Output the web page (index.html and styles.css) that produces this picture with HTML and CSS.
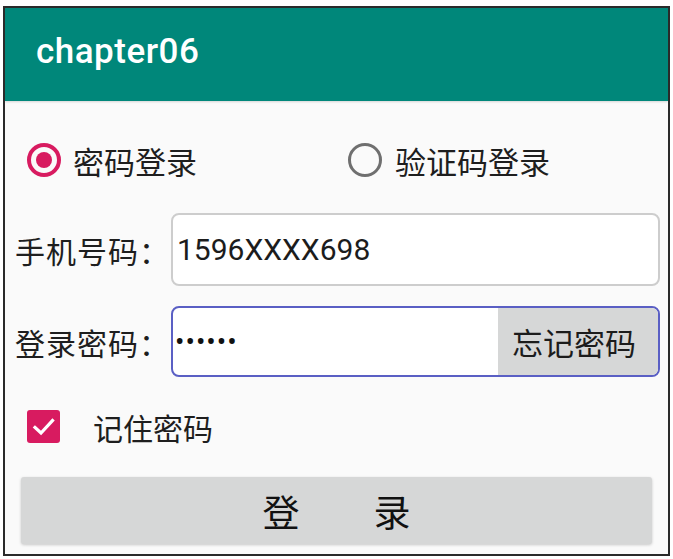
FILE: index.html
```html
<!DOCTYPE html>
<html lang="zh-CN">
<head>
<meta charset="utf-8">
<title>chapter06</title>
<link rel="stylesheet" href="styles.css">
</head>
<body>
<div class="frame">
  <header class="appbar"><span class="title">chapter06</span></header>
  <main class="content">
    <div class="radios">
      <label class="radio"><span class="radio-mark on"></span><span class="radio-text">密码登录</span></label>
      <label class="radio second"><span class="radio-mark"></span><span class="radio-text">验证码登录</span></label>
    </div>
    <div class="row row-phone">
      <span class="label">手机号码：</span>
      <div class="field"><span class="value">1596XXXX698</span></div>
    </div>
    <div class="row row-pwd">
      <span class="label">登录密码：</span>
      <div class="field focused"><span class="value dots">••••••</span><span class="forgot">忘记密码</span></div>
    </div>
    <div class="remember">
      <span class="check"><svg viewBox="0 0 33 33" width="33" height="33"><path d="M8 17.5 L14 23 L25.5 10.5" fill="none" stroke="#fff" stroke-width="3.2" stroke-linecap="square"/></svg></span>
      <span class="remember-text">记住密码</span>
    </div>
    <div class="login">登　　录</div>
  </main>
</div>
</body>
</html>
```

FILE: styles.css
```css
body {
  margin: 0;
  background: #ffffff;
  font-family: Roboto, "Noto Sans CJK SC", sans-serif;
  color: #222222;
}

.frame {
  margin: 6px 0 0 3px;
  width: 667px;
  height: 550px;
  box-sizing: border-box;
  border: 2px solid #2a2a2a;
  background: #fafafa;
  display: flex;
  flex-direction: column;
  overflow: hidden;
}

.appbar {
  flex-shrink: 0;
  height: 93px;
  background: #00877a;
  display: flex;
  align-items: center;
  padding-left: 31px;
  box-shadow: 0 1px 2px rgba(0, 0, 0, 0.15);
}

.title {
  color: #ffffff;
  font-family: Roboto, sans-serif;
  font-size: 35px;
  font-weight: 500;
  letter-spacing: 0.5px;
  margin-top: -6px;
}

.content {
  padding: 0 8px 0 10px;
  font-family: "Noto Sans CJK SC", sans-serif;
}

.radios {
  margin-top: 19px;
  height: 80px;
  display: flex;
  align-items: center;
  padding-left: 12px;
}

.radio {
  display: flex;
  align-items: center;
  flex-shrink: 0;
}

.radio:first-child {
  width: 321px;
}

.radio-mark {
  width: 34px;
  height: 34px;
  box-sizing: border-box;
  border-radius: 50%;
  border: 3px solid #6f6f6f;
  display: flex;
  align-items: center;
  justify-content: center;
  flex-shrink: 0;
}

.radio-mark.on {
  border: 4px solid #d81b60;
}

.radio-mark.on::after {
  content: "";
  width: 16px;
  height: 16px;
  border-radius: 50%;
  background: #d81b60;
}

.radio-text {
  font-size: 31px;
  margin-left: 12px;
  color: #1e1e1e;
}

.second .radio-text {
  margin-left: 13px;
}

.row {
  display: flex;
  align-items: center;
}

.row-phone {
  margin-top: 13px;
}

.row-pwd {
  margin-top: 20px;
}

.label {
  width: 156px;
  flex-shrink: 0;
  font-size: 30px;
  letter-spacing: 1px;
  color: #1e1e1e;
}

.field {
  flex: 1;
  box-sizing: border-box;
  background: #ffffff;
  border-radius: 8px;
  display: flex;
  align-items: center;
  overflow: hidden;
}

.row-phone .field {
  height: 73px;
  border: 2px solid #cdcdcd;
}

.row-pwd .field {
  height: 71px;
  border: 2px solid #5a5fc4;
}

.value {
  font-family: Roboto, sans-serif;
  font-size: 30px;
  color: #1c1c1c;
  padding-left: 4px;
}

.dots {
  font-size: 28px;
  letter-spacing: 1px;
  color: #111111;
  padding-left: 2px;
}

.forgot {
  margin-left: auto;
  align-self: stretch;
  width: 160px;
  background: #d6d7d7;
  font-family: "Noto Sans CJK SC", sans-serif;
  font-size: 31px;
  color: #1c1c1c;
  display: flex;
  align-items: center;
  justify-content: center;
  padding-right: 8px;
  box-sizing: border-box;
}

.remember {
  margin-top: 33px;
  height: 33px;
  display: flex;
  align-items: center;
  padding-left: 12px;
}

.check {
  width: 33px;
  height: 33px;
  border-radius: 3px;
  background: #d81b60;
  display: flex;
  flex-shrink: 0;
}

.remember-text {
  margin-left: 33px;
  font-size: 30px;
  color: #1e1e1e;
}

.login {
  margin: 34px 0 0 6px;
  width: 631px;
  height: 67px;
  background: #d6d7d7;
  border-radius: 3px;
  box-shadow: 0 1px 3px rgba(0, 0, 0, 0.2);
  display: flex;
  align-items: center;
  justify-content: center;
  font-size: 37px;
  color: #111111;
}
```
